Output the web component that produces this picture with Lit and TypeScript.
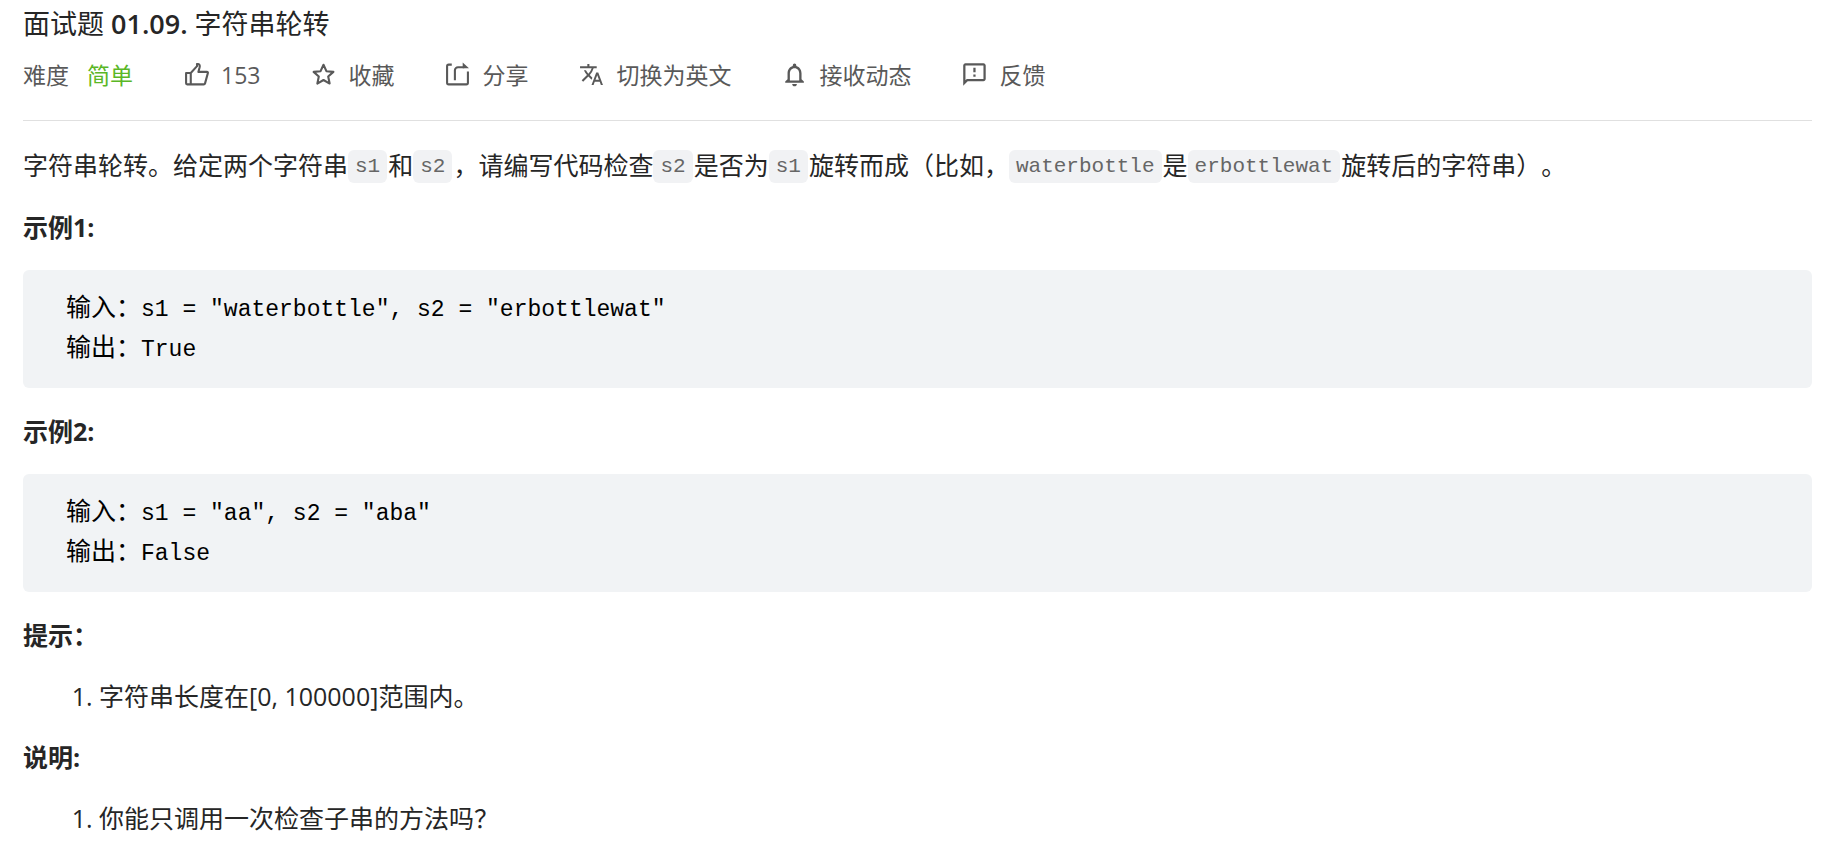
import { LitElement, html, css, svg } from "lit";
import { customElement } from "lit/decorators.js";

const icons = {
  like: svg`<path d="M2 10.5h4.5v11H3a1 1 0 0 1-1-1zM6.500 10.500 12.500 4V2c2-.6 3 .8 2.500 3l-1.200 4.500H22c.7 0 1.100.5.9 1.200l-2.700 9.800a1.400 1.400 0 0 1-1.300 1H6.500"/>`,
  star: svg`<path d="m12 2.600 2.800 6.200 6.700.7-5 4.500 1.400 6.700L12 17.300l-5.900 3.400L7.500 14l-5-4.500 6.700-.7z"/>`,
  share: svg`<path d="M6.500 2.500H3.500a1.500 1.500 0 0 0-1.500 1.500v16a1.500 1.500 0 0 0 1.500 1.500h17a1.500 1.500 0 0 0 1.500-1.500V9M9.500 17.500V8a3 3 0 0 1 3-3h6"/><path class="solid" d="M17 .5 23 6h-6z"/>`,
  translate: svg`<path class="solid" d="m12.870 15.070-2.540-2.510.030-.030A17.520 17.520 0 0 0 14.070 6H17V4h-7V2H8v2H1v2h11.170C11.500 7.920 10.440 9.750 9 11.350 8.070 10.320 7.300 9.190 6.690 8h-2c.73 1.630 1.730 3.170 2.980 4.560l-5.090 5.020L4 19l5-5 3.110 3.110zM18.500 10h-2L12 22h2l1.120-3h4.750L21 22h2zm-2.620 7 1.620-4.330L19.120 17z"/>`,
  bell: svg`<path class="solid" transform="translate(-1.400 -1.400) scale(1.120)" d="M12 22c1.100 0 2-.9 2-2h-4c0 1.100.9 2 2 2m6-6v-5c0-3.070-1.630-5.640-4.500-6.320V4a1.500 1.500 0 0 0-3 0v.68C7.640 5.360 6 7.920 6 11v5l-2 2v1h16v-1zm-2 1H8v-6c0-2.480 1.510-4.500 4-4.500s4 2.020 4 4.500z"/>`,
  feedback: svg`<path class="solid" transform="translate(-1 -1) scale(1.080)" d="M20 2H4c-1.100 0-2 .9-2 2v18l4-4h14c1.100 0 2-.9 2-2V4c0-1.100-.9-2-2-2m0 14H5.170L4 17.170V4h16zm-9-4h2v2h-2zm0-6h2v4h-2z"/>`,
};

@customElement("app-root")
export class AppRoot extends LitElement {
  static styles = css`
    :host {
      display: block;
      padding: 4px 18px 0 23px;
      background: #fff;
      color: #262626;
      font: 25px/38px "Open Sans", "Noto Sans CJK SC", sans-serif;
      text-spacing-trim: space-all;
    }
    .title {
      margin: 0;
      font-size: 27px;
      line-height: 40px;
      font-weight: 400;
    }
    .number {
      font-weight: 600;
    }
    .meta {
      display: flex;
      flex-wrap: wrap;
      align-items: center;
      gap: 0 51px;
      padding: 15px 0 29px;
      border-bottom: 1px solid #e0e0e0;
      color: #595959;
      font-size: 23px;
      line-height: 32px;
    }
    .difficulty {
      display: flex;
      gap: 18px;
    }
    .easy {
      color: #5ab726;
    }
    .action {
      display: flex;
      align-items: center;
      gap: 12px;
      padding: 0;
      border: 0;
      background: none;
      color: inherit;
      font: inherit;
      cursor: pointer;
    }
    .icon {
      width: 25px;
      height: 25px;
      margin-bottom: 2px;
      fill: none;
      stroke: currentColor;
      stroke-width: 2;
      stroke-linejoin: round;
    }
    .solid {
      fill: currentColor;
      stroke: none;
    }
    .text {
      margin: 25px 0 24px;
    }
    .label {
      margin: 0 0 23px;
      font-size: 25px;
      font-weight: 700;
    }
    .code {
      margin-right: 1px;
      padding: 5px 7px;
      border-radius: 6px;
      background: #f1f2f4;
      color: #666;
      font: 21px/24px "Liberation Mono", monospace;
      vertical-align: 3px;
    }
    .block {
      margin: 24px 0;
      padding: 20px 43px 18px;
      border-radius: 6px;
      background: #f1f3f5;
      color: #000;
      font: 23px/40px "Liberation Mono", "Noto Sans CJK SC", monospace;
      overflow-x: auto;
    }
    .field {
      font-size: 25px;
      line-height: 1;
    }
    .list {
      margin: 0 0 23px;
      padding-left: 76px;
    }
  `;

  private action(icon: keyof typeof icons, label: string) {
    return html`<button class="action" type="button">
      <svg class="icon" viewBox="0 0 24 24" aria-hidden="true">${icons[icon]}</svg>
      <span>${label}</span>
    </button>`;
  }

  private example(input: string, output: string) {
    return html`<pre class="block"><span class="field">输入\uFF1A</span>${input}
<span class="field">输出\uFF1A</span>${output}</pre>`;
  }

  render() {
    return html`
      <h1 class="title">面试题 <span class="number">01.09.</span> 字符串轮转</h1>
      <div class="meta">
        <div class="difficulty"><span>难度</span><span class="easy">简单</span></div>
        ${this.action("like", "153")} ${this.action("star", "收藏")}
        ${this.action("share", "分享")} ${this.action("translate", "切换为英文")}
        ${this.action("bell", "接收动态")} ${this.action("feedback", "反馈")}
      </div>
      <p class="text">字符串轮转。给定两个字符串<code class="code">s1</code>和<code class="code">s2</code>\uFF0C请编写代码检查<code class="code">s2</code>是否为<code class="code">s1</code>旋转而成\uFF08比如\uFF0C<code class="code">waterbottle</code>是<code class="code">erbottlewat</code>旋转后的字符串\uFF09。</p>
      <h2 class="label">示例1:</h2>
      ${this.example('s1 = "waterbottle", s2 = "erbottlewat"', "True")}
      <h2 class="label">示例2:</h2>
      ${this.example('s1 = "aa", s2 = "aba"', "False")}
      <h2 class="label">提示\uFF1A</h2>
      <ol class="list"><li>字符串长度在[0, 100000]范围内。</li></ol>
      <h2 class="label">说明:</h2>
      <ol class="list"><li>你能只调用一次检查子串的方法吗\uFF1F</li></ol>
    `;
  }
}
